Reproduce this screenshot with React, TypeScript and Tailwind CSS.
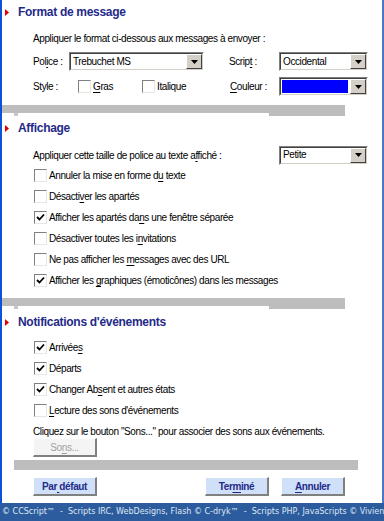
import React from "react";

const F = { fontFamily: '"Liberation Sans", Arial, sans-serif' };

function U({ children }: { children: React.ReactNode }) {
  return <span className="underline underline-offset-[2px]">{children}</span>;
}

function Arrow() {
  return (
    <div className="w-[16px] h-[15px] bg-[#d4d0c8] border-t border-l border-t-white border-l-white border-b border-r border-b-[#404040] border-r-[#404040] flex items-center justify-center shrink-0">
      <svg width="7" height="4" viewBox="0 0 7 4">
        <polygon points="0,0 7,0 3.5,4" fill="#000" />
      </svg>
    </div>
  );
}

function Select({ text, color, w = 89 }: { text?: string; color?: boolean; w?: number }) {
  return (
    <div
      className="h-[19px] shrink-0 border-t border-l border-t-[#808080] border-l-[#808080] border-b border-r border-b-white border-r-white"
      style={{ width: w }}
    >
      <div className="h-full border-t border-l border-t-[#404040] border-l-[#404040] border-b border-r border-b-[#d4d0c8] border-r-[#d4d0c8] bg-white flex items-center">
        {color ? (
          <div className="flex-1 h-[13px] ml-[1px] mr-[2px] bg-[#0000ff]" />
        ) : (
          <div className="flex-1 pl-[2px] leading-none text-black whitespace-nowrap">{text}</div>
        )}
        <Arrow />
      </div>
    </div>
  );
}

function Check({ checked }: { checked?: boolean }) {
  return (
    <div className="w-[13px] h-[13px] shrink-0 border-t border-l border-t-[#808080] border-l-[#808080] border-b border-r border-b-[#e8e6e0] border-r-[#e8e6e0] bg-white flex items-center justify-center">
      {checked && (
        <svg width="9" height="9" viewBox="0 0 9 9">
          <path d="M1 4 L3.5 6.5 L8 1.5" stroke="#000" strokeWidth="1.8" fill="none" />
        </svg>
      )}
    </div>
  );
}

function CheckRow({ checked, children }: { checked?: boolean; children: React.ReactNode }) {
  return (
    <div className="h-[21px] flex items-center pl-[32px] gap-[2px] text-black whitespace-nowrap">
      <Check checked={checked} />
      <span>{children}</span>
    </div>
  );
}

function Heading({ children }: { children: React.ReactNode }) {
  return (
    <div className="h-[24px] flex items-center">
      <svg width="4" height="7" viewBox="0 0 4 7" className="ml-[3px]">
        <polygon points="0,0 4,3.5 0,7" fill="#e00000" />
      </svg>
      <span className="ml-[9px] text-[12px] tracking-[-0.3px] font-bold text-[#1f2a89] whitespace-nowrap">
        {children}
      </span>
    </div>
  );
}

function Bar() {
  return (
    <div className="h-[11px] flex items-start">
      <div className="w-[267px] h-[8px] bg-[#bdbdbd] relative">
        <div className="absolute left-[12px] top-[8px] w-[4px] h-[3px] bg-[#c8c8c8]" />
      </div>
      <div className="w-[76px] h-[11px] bg-[#bdbdbd]" />
    </div>
  );
}

function Button({ children, disabled }: { children: React.ReactNode; disabled?: boolean }) {
  return (
    <div
      className={
        "w-[64px] h-[19px] flex items-center justify-center border-t border-l border-t-white border-l-white border-b-2 border-r-2 border-b-[#808080] border-r-[#808080] whitespace-pre " +
        (disabled ? "bg-[#f4f4f4] text-[#a0a0a0]" : "bg-[#cfe0f8] font-bold text-[#1f2a89]")
      }
    >
      <span>{children}</span>
    </div>
  );
}

export default function App() {
  return (
    <div
      className="w-[384px] h-[521px] bg-white flex flex-col overflow-hidden text-[10px] tracking-[-0.4px]"
      style={F}
    >
      <div className="flex-1 flex flex-col border-l-2 border-l-[#0a52d8] border-r-2 border-r-[#4a78c8]">
        <Heading>Format de message</Heading>
        <div className="mt-[6px] h-[16px] flex items-center pl-[31px] text-black whitespace-nowrap">
          Appliquer le format ci-dessous aux messages à envoyer :
        </div>
        <div className="mt-[6px] h-[19px] flex items-center text-black whitespace-nowrap">
          <span className="w-[36px] ml-[31px] shrink-0">
            Pol<U>i</U>ce :
          </span>
          <Select text="Trebuchet MS" w={135} />
          <span className="ml-[25px] w-[50px] shrink-0">
            Scrip<U>t</U> :
          </span>
          <Select text="Occidental" />
        </div>
        <div className="mt-[6px] h-[19px] flex items-center text-black whitespace-nowrap">
          <span className="w-[45px] ml-[31px] shrink-0">Style :</span>
          <Check />
          <span className="ml-[2px] w-[49px] shrink-0">
            <U>G</U>ras
          </span>
          <Check />
          <span className="ml-[2px] w-[73px] shrink-0">Italique</span>
          <span className="w-[49px] shrink-0">
            <U>C</U>ouleur :
          </span>
          <Select color />
        </div>
        <div className="mt-[9px]">
          <Bar />
        </div>
        <Heading>Affichage</Heading>
        <div className="mt-[5px] h-[20px] flex items-center text-black whitespace-nowrap">
          <span className="ml-[31px] w-[246px] shrink-0">
            Appliquer cette taille de police au texte a<U>f</U>fiché :
          </span>
          <Select text="Petite" />
        </div>
        <CheckRow>
          Annuler la mise en forme d<U>u</U> texte
        </CheckRow>
        <CheckRow>
          Désacti<U>v</U>er les apartés
        </CheckRow>
        <CheckRow checked>
          Afficher les apartés da<U>n</U>s une fenêtre séparée
        </CheckRow>
        <CheckRow>
          Désactiver toutes les i<U>n</U>vitations
        </CheckRow>
        <CheckRow>
          Ne pas afficher les <U>m</U>essages avec des URL
        </CheckRow>
        <CheckRow checked>
          Afficher les <U>g</U>raphiques (émoticônes) dans les messages
        </CheckRow>
        <div className="mt-[7px]">
          <Bar />
        </div>
        <div className="mt-[1px]">
          <Heading>Notifications d'événements</Heading>
        </div>
        <div className="mt-[3px]">
          <CheckRow checked>
            Arrivée<U>s</U>
          </CheckRow>
          <CheckRow checked>Départs</CheckRow>
          <CheckRow checked>
            Changer Ab<U>s</U>ent et autres états
          </CheckRow>
          <CheckRow>
            <U>L</U>ecture des sons d'événements
          </CheckRow>
        </div>
        <div className="mt-[3px] h-[14px] flex items-center pl-[31px] text-black whitespace-nowrap">
          Cliquez sur le bouton "Sons..." pour associer des sons aux événements.
        </div>
        <div className="pl-[31px]">
          <Button disabled>
            So<U>n</U>s...
          </Button>
        </div>
        <div className="mt-[3px] ml-[12px] w-[344px] h-[10px] bg-[#bdbdbd]" />
        <div className="mt-[7px] flex pl-[31px]">
          <Button>
            Par<U> </U>défaut
          </Button>
          <div className="ml-[108px]">
            <Button>
              Ter<U>m</U>iné
            </Button>
          </div>
          <div className="ml-[12px]">
            <Button>
              <U>A</U>nnuler
            </Button>
          </div>
        </div>
      </div>
      <div
        className="h-[18px] bg-[#2d5c9e] text-[#dfe7f2] text-[8px] tracking-normal flex items-center pl-[2px] whitespace-pre"
        style={{ fontFamily: '"DejaVu Sans", Verdana, sans-serif' }}
      >
        © CCScript™  -  Scripts IRC, WebDesigns, Flash © C-dryk™  -  Scripts PHP, JavaScripts © Vivien
      </div>
    </div>
  );
}
